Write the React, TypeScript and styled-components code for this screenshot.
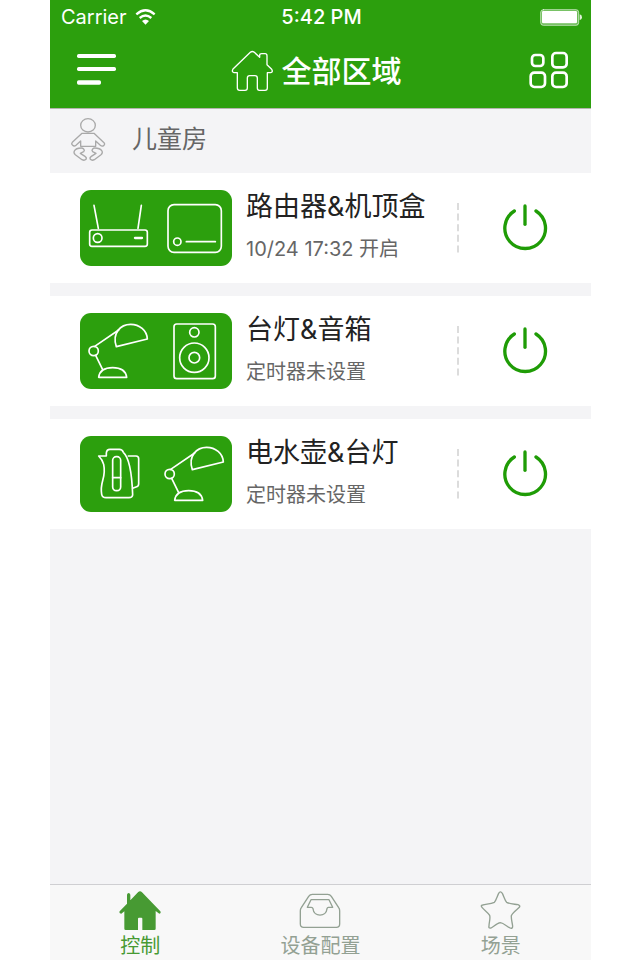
import React from "react";
import styled, { createGlobalStyle } from "styled-components";

const GlobalStyle = createGlobalStyle`
  * { box-sizing: border-box; }
  body {
    margin: 0;
    background: #ffffff;
    font-family: Inter, "Noto Sans CJK SC", sans-serif;
  }
  h1, h2, h3, p, ul { margin: 0; padding: 0; font-weight: 400; }
  button { border: 0; padding: 0; background: none; font: inherit; color: inherit; cursor: pointer; }
  svg { display: block; }
`;

const Screen = styled.div`
  display: flex;
  flex-direction: column;
  min-height: 100vh;
  margin: 0 49px 0 50px;
  background: #f4f4f6;
`;

const Header = styled.header`
  background: #2c9f0d;
  color: #ffffff;
  border-bottom: 1px solid #b5b5ae;
`;

const StatusBar = styled.div`
  display: grid;
  grid-template-columns: 1fr auto 1fr;
  align-items: center;
  height: 34px;
  padding: 0 9px 0 11px;
  font-size: 20px;
  line-height: 24px;
`;

const Carrier = styled.span`
  display: flex;
  align-items: center;
  gap: 8px;
`;

const Clock = styled.time`
  font-weight: 500;
`;

const StatusEnd = styled.span`
  justify-self: end;
`;

const NavBar = styled.div`
  display: grid;
  grid-template-columns: 1fr auto 1fr;
  align-items: center;
  height: 74px;
  padding: 0 22px;
`;

const NavButton = styled.button<{ $end?: boolean }>`
  justify-self: ${(p) => (p.$end ? "end" : "start")};
  padding: 0 0 4px 5px;
`;

const TitleButton = styled.button`
  display: flex;
  align-items: center;
  gap: 9px;
  padding-right: 9px;
`;

const Title = styled.h1`
  font-size: 30px;
  line-height: 40px;
  font-weight: 500;
`;

const Main = styled.main`
  flex: 1;
`;

const RoomHeader = styled.div`
  display: flex;
  align-items: center;
  gap: 26px;
  height: 64px;
  padding: 0 20px 4px;
  color: #a9a9a9;
`;

const RoomName = styled.h2`
  font-size: 25px;
  line-height: 32px;
  color: #666666;
`;

const DeviceList = styled.ul`
  display: flex;
  flex-direction: column;
  gap: 13px;
  list-style: none;
`;

const DeviceRow = styled.li`
  display: flex;
  align-items: center;
  height: 110px;
  padding: 0 42px 0 30px;
  background: #ffffff;
`;

const Tile = styled.div`
  display: flex;
  flex: none;
  border-radius: 11px;
  background: #2c9f0d;
  color: #ffffff;
`;

const DeviceText = styled.div`
  flex: 1;
  min-width: 0;
  padding: 0 0 4px 14px;
`;

const DeviceName = styled.h3`
  font-size: 27px;
  line-height: 40px;
  color: #222222;
  white-space: nowrap;
`;

const DeviceStatus = styled.p`
  padding-top: 6px;
  font-size: 20px;
  line-height: 32px;
  color: #666666;
  white-space: nowrap;
`;

const PowerButton = styled.button`
  margin-left: 42px;
  color: #1f9c06;
`;

const TabBar = styled.nav`
  display: grid;
  grid-template-columns: repeat(3, 1fr);
  height: 76px;
  border-top: 1px solid #cfcfd2;
  background: #f8f8f8;
`;

const Tab = styled.button<{ $active?: boolean }>`
  display: flex;
  flex-direction: column;
  align-items: center;
  padding-top: 5px;
  font-size: 20px;
  line-height: 28px;
  color: ${(p) => (p.$active ? "#479a33" : "#93a193")};
`;

type GlyphProps = {
  box: string;
  w: number;
  h: number;
  stroke?: number;
  children: React.ReactNode;
};

function Glyph({ box, w, h, stroke = 0, children }: GlyphProps) {
  return (
    <svg
      viewBox={box}
      width={w}
      height={h}
      fill={stroke ? "none" : "currentColor"}
      stroke={stroke ? "currentColor" : "none"}
      strokeWidth={stroke}
      strokeLinecap="round"
      strokeLinejoin="round"
      aria-hidden="true"
    >
      {children}
    </svg>
  );
}

const WifiIcon = () => (
  <Glyph box="0 0 63 48" w={21} h={16}>
    <path d="M4 16Q31.500 -8 59 16" fill="none" stroke="currentColor" strokeWidth="7" strokeLinecap="butt" />
    <path d="M14 27Q31.500 12 49 27" fill="none" stroke="currentColor" strokeWidth="7" strokeLinecap="butt" />
    <path d="M21 36Q31.500 27 42 36L31.500 47Z" />
  </Glyph>
);

const BatteryIcon = () => (
  <Glyph box="0 0 126 51" w={42} h={17}>
    <rect x="2" y="2" width="114" height="47" rx="8" fill="#ffffff" fillOpacity="0.3" stroke="#ffffff" strokeOpacity="0.6" strokeWidth="3" />
    <rect x="6" y="6" width="105" height="37" rx="4" />
    <path d="M119 16Q126 17 126 25Q126 33 119 34Z" fillOpacity="0.85" />
  </Glyph>
);

const MenuIcon = () => (
  <Glyph box="81 159 117 96" w={39} h={32}>
    <rect x="81" y="162" width="117" height="12" rx="5" />
    <rect x="81" y="201" width="117" height="12" rx="5" />
    <rect x="81" y="241" width="72" height="13" rx="5" />
  </Glyph>
);

const HouseIcon = () => (
  <Glyph box="0 0 126 126" w={42} h={42} stroke={4}>
    <path d="M58 7Q64 2 70 7L86 22V16Q86 11 92 11H102Q108 11 108 17V44L122 58Q127 66 119 68H109V114Q109 121 102 121H85Q79 121 79 114V84Q79 77 72 77H56Q49 77 49 84V114Q49 121 42 121H26Q19 121 19 114V68H9Q1 66 6 57Z" />
  </Glyph>
);

const GridIcon = () => (
  <Glyph box="327 151 120 120" w={40} h={40} stroke={8}>
    <rect x="336" y="169" width="34" height="33" rx="10" />
    <rect x="397" y="163" width="43" height="43" rx="11" />
    <rect x="332" y="222" width="43" height="43" rx="11" />
    <rect x="397" y="222" width="43" height="43" rx="11" />
  </Glyph>
);

const BabyIcon = () => (
  <Glyph box="60 30 108 135" w={36} h={45} stroke={4}>
    <ellipse cx="114" cy="55" rx="22" ry="20" />
    <path d="M96 79H132L162 107Q166 112 161 116Q156 119 151 115L137 102V118H92V102L78 115Q72 119 68 115Q63 111 67 106Z" />
    <path d="M94 123C82 123 76 126 73 132Q70 138 76 143L96 158Q103 162 108 157Q111 152 105 148L91 139L101 134Q105 130 101 126Q98 123 94 123Z" />
    <path d="M134 123C146 123 152 126 156 132Q159 138 153 143L133 158Q126 162 121 157Q118 152 124 148L138 139L128 134Q124 130 128 126Q131 123 134 123Z" />
  </Glyph>
);

const RouterIcon = () => (
  <Glyph box="0 0 228 228" w={76} h={76} stroke={5}>
    <rect x="29" y="120" width="173" height="49" rx="7" />
    <circle cx="53" cy="144" r="13" />
    <path d="M42 46L55 115M184 46L174 115" />
    <path d="M165 144H186" strokeWidth="7" />
  </Glyph>
);

const SetTopBoxIcon = () => (
  <Glyph box="0 0 228 228" w={76} h={76} stroke={5}>
    <rect x="36" y="44" width="160" height="143" rx="18" />
    <circle cx="64" cy="155" r="11" />
    <path d="M91 155H178" />
  </Glyph>
);

const LampIcon = () => (
  <Glyph box="0 0 228 228" w={76} h={76} stroke={5}>
    <circle cx="41" cy="114" r="14" />
    <path d="M44 100L116 51M47 127L68 170" />
    <path d="M109 101C95 60 122 34 152 34C178 34 201 52 202 78Z" />
    <path d="M56 193Q60 164 98 164Q136 164 140 193Z" />
  </Glyph>
);

const SpeakerIcon = () => (
  <Glyph box="0 0 228 228" w={76} h={76} stroke={5}>
    <rect x="54" y="33" width="124" height="164" rx="8" />
    <circle cx="115" cy="58" r="14" />
    <circle cx="115" cy="134" r="44" />
    <circle cx="115" cy="134" r="16" />
  </Glyph>
);

const KettleIcon = () => (
  <Glyph box="30 33 228 228" w={76} h={76} stroke={5}>
    <path d="M86 93H109V84Q110 73 120 73H148Q157 73 160 82C180 100 186 150 188 210Q187 218 177 218H108Q97 218 95 208C88 170 110 160 101 118Q98 105 86 93Z" />
    <path d="M175 93H198Q206 93 206 101V177Q206 184 198 186L188 190" />
    <rect x="128" y="95" width="24" height="102" rx="11" />
    <path d="M128 158H152" />
  </Glyph>
);

const PowerIcon = () => (
  <Glyph box="0 0 144 144" w={48} h={48} stroke={10}>
    <path d="M40 21A61 61 0 1 0 105 21" />
    <path d="M72 6V61" />
  </Glyph>
);

const DashedDivider = () => (
  <svg width={2} height={50} viewBox="0 0 2 50" aria-hidden="true">
    <path d="M1 0V50" stroke="#dcdcdc" strokeWidth="2" strokeDasharray="7 3.600" />
  </svg>
);

const HomeTabIcon = () => (
  <Glyph box="207 60 126 126" w={42} h={42}>
    <path d="M270 64Q273 64 276 67L331 124Q334 130 328 131L317 123V176Q317 180 313 180H277V146Q277 143 274 143H267Q264 143 264 146V180H227Q223 180 223 176V124L214 131Q206 130 209 124L231 101V74Q232 69 236 69Q240 70 241 74V91L264 67Q267 64 270 64Z" />
  </Glyph>
);

const TrayTabIcon = () => (
  <Glyph box="150 60 126 126" w={42} h={42} stroke={4}>
    <path d="M190 73H236Q243 73 247 79L269 113Q272 117 272 122V162Q272 172 262 172H164Q154 172 154 162V122Q154 117 157 113L179 79Q183 73 190 73Z" />
    <path d="M175 112L186 89H240L251 112H238Q235 112 234 116C232 142 194 142 192 116Q191 112 187 112Z" />
  </Glyph>
);

const StarTabIcon = () => (
  <Glyph box="120 60 126 126" w={42} h={42} stroke={4}>
    <path d="M176 70Q181 61 187 70C192 80 194 90 200 97C210 102 222 102 234 104Q242 107 238 112C230 120 218 128 214 137C213 148 217 158 218 169Q218 177 210 174C200 169 191 159 181 158C171 159 162 169 153 174Q145 176 147 168C147 157 152 146 149 136C144 127 133 121 126 112Q121 106 128 105C140 102 152 102 163 97C169 90 171 80 176 70Z" />
  </Glyph>
);

const devices = [
  { name: "路由器&机顶盒", status: "10/24 17:32 开启", Left: RouterIcon, Right: SetTopBoxIcon },
  { name: "台灯&音箱", status: "定时器未设置", Left: LampIcon, Right: SpeakerIcon },
  { name: "电水壶&台灯", status: "定时器未设置", Left: KettleIcon, Right: LampIcon },
];

const tabs = [
  { label: "控制", Icon: HomeTabIcon, active: true },
  { label: "设备配置", Icon: TrayTabIcon, active: false },
  { label: "场景", Icon: StarTabIcon, active: false },
];

export default function App() {
  return (
    <>
      <GlobalStyle />
      <Screen>
        <Header>
          <StatusBar>
            <Carrier>
              Carrier
              <WifiIcon />
            </Carrier>
            <Clock>5:42 PM</Clock>
            <StatusEnd>
              <BatteryIcon />
            </StatusEnd>
          </StatusBar>
          <NavBar>
            <NavButton aria-label="菜单">
              <MenuIcon />
            </NavButton>
            <TitleButton>
              <HouseIcon />
              <Title>全部区域</Title>
            </TitleButton>
            <NavButton $end aria-label="视图">
              <GridIcon />
            </NavButton>
          </NavBar>
        </Header>
        <Main>
          <RoomHeader>
            <BabyIcon />
            <RoomName>儿童房</RoomName>
          </RoomHeader>
          <DeviceList>
            {devices.map(({ name, status, Left, Right }) => (
              <DeviceRow key={name}>
                <Tile>
                  <Left />
                  <Right />
                </Tile>
                <DeviceText>
                  <DeviceName>{name}</DeviceName>
                  <DeviceStatus>{status}</DeviceStatus>
                </DeviceText>
                <DashedDivider />
                <PowerButton aria-label={`${name} 开关`}>
                  <PowerIcon />
                </PowerButton>
              </DeviceRow>
            ))}
          </DeviceList>
        </Main>
        <TabBar>
          {tabs.map(({ label, Icon, active }) => (
            <Tab key={label} $active={active} aria-current={active ? "page" : undefined}>
              <Icon />
              {label}
            </Tab>
          ))}
        </TabBar>
      </Screen>
    </>
  );
}
